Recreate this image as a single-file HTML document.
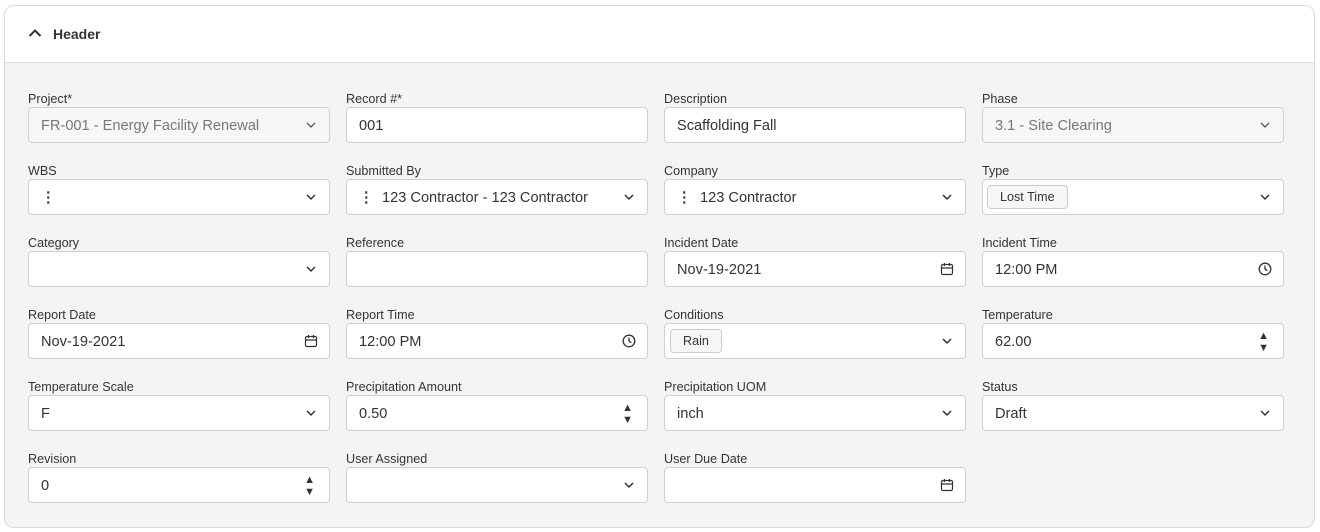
<!DOCTYPE html>
<html><head><style>
*{box-sizing:border-box;margin:0;padding:0}
body{width:1320px;height:532px;background:#fff;font-family:"Liberation Sans",Arial,sans-serif;position:relative;overflow:hidden}
.card{position:absolute;left:4px;top:5px;width:1311px;height:523px;border:1px solid #d9d9d9;border-radius:10px;overflow:hidden;background:#f4f4f4}
.hd{height:57px;background:#fff;border-bottom:1px solid #dedede;position:relative}
.hd span{position:absolute;left:48px;top:20px;font-size:14px;font-weight:bold;color:#333}
.hd svg{position:absolute;left:23px;top:22px}
.f{position:absolute;width:302px}
.f label{display:block;font-size:12.6px;color:#333;height:17px;line-height:16px;padding-top:1px}
.in{height:36px;border:1px solid #d0d0d0;border-radius:4px;background:#fff;position:relative;font-size:14.6px;color:#333;line-height:36px;padding-left:12px}
.in.dis{background:#f7f7f7;color:#777}
.ic{position:absolute;right:11px;top:10px}
.dots{display:inline-block;width:18px;color:#444;font-weight:bold;margin-right:5px}
.tag{display:inline-block;height:24px;line-height:22px;border:1px solid #ccc;border-radius:4px;background:#f6f6f6;font-size:12.6px;padding:0 12px;margin-left:-8px;vertical-align:middle;position:relative;top:-1px}
.sp{position:absolute;right:14px;top:6px;font-size:11px;line-height:12px;color:#333}
</style></head><body>
<div class="card">
<div class="hd"><svg width="14" height="10" viewBox="0 0 14 10"><path d="M1.5 8 L7 2.5 L12.5 8" stroke="#333" stroke-width="2" fill="none"/></svg><span>Header</span></div>
</div>
<div class="f" style="left:28px;top:90px"><label>Project*</label><div class="in dis">FR-001 - Energy Facility Renewal<svg class="ic" width="14" height="14" viewBox="0 0 14 14"><path d="M3 5l4 4 4-4" stroke="#555" stroke-width="1.3" fill="none"/></svg></div></div>
<div class="f" style="left:346px;top:90px"><label>Record #*</label><div class="in">001</div></div>
<div class="f" style="left:664px;top:90px"><label>Description</label><div class="in">Scaffolding Fall</div></div>
<div class="f" style="left:982px;top:90px"><label>Phase</label><div class="in dis">3.1 - Site Clearing<svg class="ic" width="14" height="14" viewBox="0 0 14 14"><path d="M3 5l4 4 4-4" stroke="#555" stroke-width="1.3" fill="none"/></svg></div></div>

<div class="f" style="left:28px;top:162px"><label>WBS</label><div class="in"><span class="dots">⋮</span><svg class="ic" width="14" height="14" viewBox="0 0 14 14"><path d="M3 5l4 4 4-4" stroke="#333" stroke-width="1.5" fill="none"/></svg></div></div>
<div class="f" style="left:346px;top:162px"><label>Submitted By</label><div class="in"><span class="dots">⋮</span>123 Contractor - 123 Contractor<svg class="ic" width="14" height="14" viewBox="0 0 14 14"><path d="M3 5l4 4 4-4" stroke="#333" stroke-width="1.5" fill="none"/></svg></div></div>
<div class="f" style="left:664px;top:162px"><label>Company</label><div class="in"><span class="dots">⋮</span>123 Contractor<svg class="ic" width="14" height="14" viewBox="0 0 14 14"><path d="M3 5l4 4 4-4" stroke="#333" stroke-width="1.5" fill="none"/></svg></div></div>
<div class="f" style="left:982px;top:162px"><label>Type</label><div class="in"><span class="tag">Lost Time</span><svg class="ic" width="14" height="14" viewBox="0 0 14 14"><path d="M3 5l4 4 4-4" stroke="#333" stroke-width="1.5" fill="none"/></svg></div></div>

<div class="f" style="left:28px;top:234px"><label>Category</label><div class="in"><svg class="ic" width="14" height="14" viewBox="0 0 14 14"><path d="M3 5l4 4 4-4" stroke="#333" stroke-width="1.5" fill="none"/></svg></div></div>
<div class="f" style="left:346px;top:234px"><label>Reference</label><div class="in"></div></div>
<div class="f" style="left:664px;top:234px"><label>Incident Date</label><div class="in">Nov-19-2021<svg class="ic" width="14" height="14" viewBox="0 0 14 14"><rect x="1.5" y="2.5" width="11" height="10" rx="1.5" stroke="#333" stroke-width="1.2" fill="none"/><path d="M1.5 6h11M4.5 1v3M9.5 1v3" stroke="#333" stroke-width="1.2"/></svg></div></div>
<div class="f" style="left:982px;top:234px"><label>Incident Time</label><div class="in">12:00 PM<svg class="ic" width="14" height="14" viewBox="0 0 14 14"><circle cx="7" cy="7" r="5.8" stroke="#333" stroke-width="1.3" fill="none"/><path d="M7 3.5V7l2.3 1.8" stroke="#333" stroke-width="1.3" fill="none"/></svg></div></div>

<div class="f" style="left:28px;top:306px"><label>Report Date</label><div class="in">Nov-19-2021<svg class="ic" width="14" height="14" viewBox="0 0 14 14"><rect x="1.5" y="2.5" width="11" height="10" rx="1.5" stroke="#333" stroke-width="1.2" fill="none"/><path d="M1.5 6h11M4.5 1v3M9.5 1v3" stroke="#333" stroke-width="1.2"/></svg></div></div>
<div class="f" style="left:346px;top:306px"><label>Report Time</label><div class="in">12:00 PM<svg class="ic" width="14" height="14" viewBox="0 0 14 14"><circle cx="7" cy="7" r="5.8" stroke="#333" stroke-width="1.3" fill="none"/><path d="M7 3.5V7l2.3 1.8" stroke="#333" stroke-width="1.3" fill="none"/></svg></div></div>
<div class="f" style="left:664px;top:306px"><label>Conditions</label><div class="in"><span class="tag" style="margin-left:-7px">Rain</span><svg class="ic" width="14" height="14" viewBox="0 0 14 14"><path d="M3 5l4 4 4-4" stroke="#333" stroke-width="1.5" fill="none"/></svg></div></div>
<div class="f" style="left:982px;top:306px"><label>Temperature</label><div class="in">62.00<div class="sp">▲<br>▼</div></div></div>

<div class="f" style="left:28px;top:378px"><label>Temperature Scale</label><div class="in">F<svg class="ic" width="14" height="14" viewBox="0 0 14 14"><path d="M3 5l4 4 4-4" stroke="#333" stroke-width="1.5" fill="none"/></svg></div></div>
<div class="f" style="left:346px;top:378px"><label>Precipitation Amount</label><div class="in">0.50<div class="sp">▲<br>▼</div></div></div>
<div class="f" style="left:664px;top:378px"><label>Precipitation UOM</label><div class="in">inch<svg class="ic" width="14" height="14" viewBox="0 0 14 14"><path d="M3 5l4 4 4-4" stroke="#333" stroke-width="1.5" fill="none"/></svg></div></div>
<div class="f" style="left:982px;top:378px"><label>Status</label><div class="in">Draft<svg class="ic" width="14" height="14" viewBox="0 0 14 14"><path d="M3 5l4 4 4-4" stroke="#333" stroke-width="1.5" fill="none"/></svg></div></div>

<div class="f" style="left:28px;top:450px"><label>Revision</label><div class="in">0<div class="sp">▲<br>▼</div></div></div>
<div class="f" style="left:346px;top:450px"><label>User Assigned</label><div class="in"><svg class="ic" width="14" height="14" viewBox="0 0 14 14"><path d="M3 5l4 4 4-4" stroke="#333" stroke-width="1.5" fill="none"/></svg></div></div>
<div class="f" style="left:664px;top:450px"><label>User Due Date</label><div class="in"><svg class="ic" width="14" height="14" viewBox="0 0 14 14"><rect x="1.5" y="2.5" width="11" height="10" rx="1.5" stroke="#333" stroke-width="1.2" fill="none"/><path d="M1.5 6h11M4.5 1v3M9.5 1v3" stroke="#333" stroke-width="1.2"/></svg></div></div>
</body></html>
